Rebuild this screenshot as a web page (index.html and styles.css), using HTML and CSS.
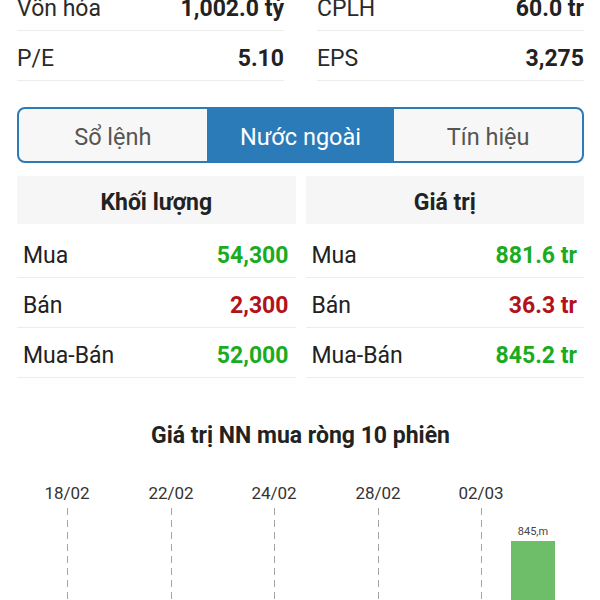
FILE: index.html
```html
<!DOCTYPE html>
<html lang="vi">
<head>
    <meta charset="UTF-8">
    <meta name="viewport" content="width=device-width, initial-scale=1.0">
    <title>Nước ngoài</title>
    <link rel="stylesheet" href="styles.css">
</head>
<body>
    <div class="page">
        <!-- chỉ số cơ bản -->
        <div class="stats">
            <div class="stat-row"><span>Vốn hóa</span><b>1,002.0 tỷ</b></div>
            <div class="stat-row"><span>CPLH</span><b>60.0 tr</b></div>
            <div class="stat-row"><span>P/E</span><b>5.10</b></div>
            <div class="stat-row"><span>EPS</span><b>3,275</b></div>
        </div>

        <div class="tabs">
            <div class="tab">Sổ lệnh</div>
            <div class="tab active">Nước ngoài</div>
            <div class="tab">Tín hiệu</div>
        </div>

        <div class="tables">
            <div class="card">
                <div class="card-head">Khối lượng</div>
                <div class="card-row"><span>Mua</span><b class="up">54,300</b></div>
                <div class="card-row"><span>Bán</span><b class="down">2,300</b></div>
                <div class="card-row"><span>Mua-Bán</span><b class="up">52,000</b></div>
            </div>
            <div class="card">
                <div class="card-head">Giá trị</div>
                <div class="card-row"><span>Mua</span><b class="up">881.6 tr</b></div>
                <div class="card-row"><span>Bán</span><b class="down">36.3 tr</b></div>
                <div class="card-row"><span>Mua-Bán</span><b class="up">845.2 tr</b></div>
            </div>
        </div>

        <h2 class="chart-title">Giá trị NN mua ròng 10 phiên</h2>

        <svg class="chart" width="600" height="149" viewBox="0 0 600 149">
            <g class="dates">
                <text x="67" y="48">18/02</text>
                <text x="171" y="48">22/02</text>
                <text x="274" y="48">24/02</text>
                <text x="378" y="48">28/02</text>
                <text x="481" y="48">02/03</text>
            </g>
            <g class="grid">
                <line x1="67.5" y1="57" x2="67.5" y2="149" />
                <line x1="171.5" y1="57" x2="171.5" y2="149" />
                <line x1="274.5" y1="57" x2="274.5" y2="149" />
                <line x1="378.5" y1="57" x2="378.5" y2="149" />
                <line x1="481.5" y1="57" x2="481.5" y2="149" />
            </g>
            <rect class="bar" x="511" y="90" width="44" height="59" />
            <text class="bar-label" x="533" y="84">845,m</text>
        </svg>
    </div>
</body>
</html>
```

FILE: styles.css
```css
body {
    margin: 0;
    font-family: Roboto, "Noto Sans", sans-serif;
    color: #222;
    background: #fff;
    overflow: hidden;
}
.page {
    padding: 0 16px 0 17px;
}
.stats {
    display: grid;
    grid-template-columns: 1fr 1fr;
    column-gap: 33px;
    margin-top: -19px;
}
.stat-row {
    display: flex;
    justify-content: space-between;
    align-items: center;
    box-sizing: border-box;
    height: 50px;
    padding-top: 6px;
    border-bottom: 1px solid #ececec;
    font-size: 23px;
}
.stat-row span {
    color: #2a2a2a;
}
.stat-row b {
    font-weight: 700;
    color: #222;
}
.tabs {
    display: flex;
    margin-top: 26px;
    height: 52px;
    border: 2px solid #2b7bb9;
    border-radius: 8px;
    overflow: hidden;
    background: #f7f7f7;
}
.tab {
    flex: 1;
    display: flex;
    align-items: center;
    justify-content: center;
    padding-top: 4px;
    font-size: 23.5px;
    color: #555;
}
.tab.active {
    background: #2b7bb9;
    color: #fff;
}
.tables {
    display: grid;
    grid-template-columns: 1fr 1fr;
    column-gap: 10px;
    margin-top: 13px;
}
.card-head {
    box-sizing: border-box;
    height: 48px;
    padding-top: 4px;
    display: flex;
    align-items: center;
    justify-content: center;
    background: #f6f6f6;
    font-size: 23px;
    font-weight: 700;
    color: #222;
    margin-bottom: 4px;
}
.card-row {
    display: flex;
    justify-content: space-between;
    align-items: center;
    box-sizing: border-box;
    height: 50px;
    padding: 5px 7px 0 6px;
    border-bottom: 1px solid #ececec;
    font-size: 23px;
}
.card-row b {
    font-weight: 700;
}
.up {
    color: #1aab1f;
}
.down {
    color: #b3121a;
}
.chart-title {
    margin: 43px 0 0;
    height: 30px;
    line-height: 30px;
    text-align: center;
    font-size: 23px;
    font-weight: 700;
    color: #222;
}
.chart {
    display: block;
    margin-left: -17px;
}
.dates text {
    font-family: Roboto, sans-serif;
    font-size: 17px;
    fill: #333;
    text-anchor: middle;
}
.grid line {
    stroke: #a5a5a5;
    stroke-width: 1;
    stroke-dasharray: 7 5;
}
.bar {
    fill: #6dbd69;
}
.bar-label {
    font-family: Roboto, sans-serif;
    font-size: 11px;
    fill: #444;
    text-anchor: middle;
}
```
